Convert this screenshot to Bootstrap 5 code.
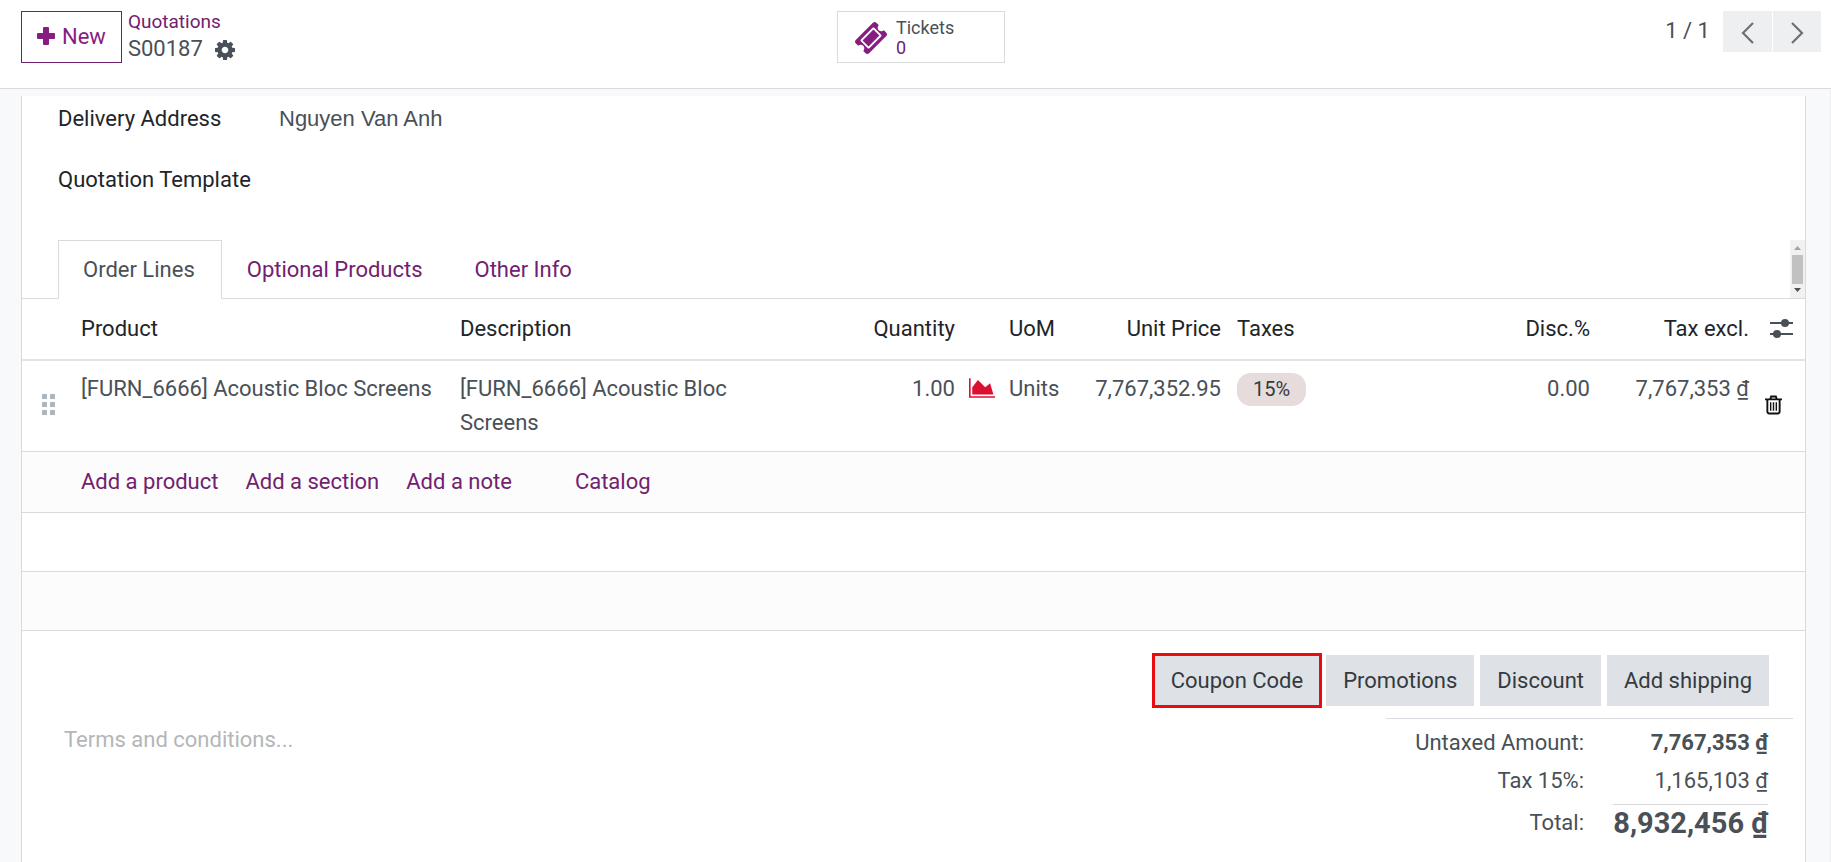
<!DOCTYPE html>
<html lang="en">
<head>
<meta charset="utf-8">
<meta name="viewport" content="width=device-width, initial-scale=1">
<title>S00187 - Quotations</title>
<link href="https://cdn.jsdelivr.net/npm/bootstrap@5.3.0/dist/css/bootstrap.min.css" rel="stylesheet">
<style>
  :root { --line: #d8dadd; --ink: #495057; --brand: #71216f; --brand-bright: #871d82; }
  body { font-family: Roboto, "Liberation Sans", sans-serif; font-size: 22px; line-height: 34px; color: var(--ink); background: #f8f9fa; }
  a, .brand-text { color: var(--brand); text-decoration: none; }
  .control-bar { height: 89px; border-bottom: 1px solid var(--line); padding: 11px 10px 0 21px; }
  .side-group { flex: 1 1 0; }
  .btn { border-radius: 0; font-size: 22px; line-height: 33px; }
  .btn-new { color: var(--brand-bright); border: 1px solid var(--brand); height: 52px; padding: 6px 15px 8px; gap: 7px; }
  .crumbs { font-size: 19px; line-height: 22px; padding-left: 6px; }
  .crumbs .current { font-size: 22px; line-height: 32px; }
  .stat-btn { width: 168px; height: 52px; border: 1px solid var(--line); background: #fff; font-size: 18px; line-height: 20px; color: var(--ink); padding: 2px 16px 0; }
  .pager-text { margin-right: 13px; padding-top: 3px; }
  .pager-btn { width: 49px; height: 41px; padding: 0; background: #eeeff1; border: 0; }
  .view-area { border-right: 1px solid #eceef0; padding: 7px 24px 0 21px; }
  .sheet { border: 1px solid var(--line); border-width: 0 1px; min-height: calc(100vh - 96px); }
  .field-row { padding: 6px 0 0 36px; height: 61px; color: #212529; }
  .field-row label { width: 221px; }
  .field-row .value { font-family: "Liberation Sans", sans-serif; color: var(--ink); }
  .tab-strip { border-bottom: 1px solid var(--line); height: 59px; margin-top: 22px; padding-left: 36px; }
  .tab-strip .nav-tabs { border: 0; }
  .tab-strip .nav-link { border-radius: 0; color: var(--brand); padding: 12px 26px 12px 24px; height: 59px; margin: 0; }
  .tab-strip .nav-link.active { color: var(--ink); border-color: var(--line) var(--line) #fff; }
  .scroller { width: 15px; background: #f1f1f1; padding: 6px 2px; }
  .scroller .thumb { height: 29px; width: 11px; background: #c1c1c1; }
  .lines-table { table-layout: fixed; width: 100%; }
  .lines-table th { font-weight: 400; color: #212529; height: 61px; padding: 0 8px; border-bottom: 2px solid #e1e3e5; }
  .lines-table td { padding: 11px 8px 0; vertical-align: top; border-bottom: 1px solid var(--line); }
  .lines-table .line-row td { height: 91px; }
  .lines-table .filler td { height: 59px; }
  .lines-table .actions td { height: 61px; padding-top: 13px; }
  .lines-table .striped td { background: #fcfcfc; }
  .lines-table .tool-cell { padding: 0 8px 2px; vertical-align: middle; }
  .action-links { gap: 27px; }
  .action-links .catalog { margin-left: 36px; }
  .icon-btn { border: 0; background: none; padding: 0; display: block; }
  .forecast { padding-top: 6px; }
  .tax-pill { display: inline-block; background: #e6dcdc; border-radius: 14px; font-size: 20px; line-height: 33px; padding: 0 16px; color: #343a40; }
  .offers { padding: 24px 36px 0 0; gap: 6px; }
  .btn-gray { background: #dee2e6; color: #343a40; border: 0; padding: 9px 17px; }
  .marked { outline: 3px solid #e80c0f; outline-offset: -1px; }
  .terms-box { padding: 17px 42px 0; }
  .terms { border: 0; resize: none; width: 100%; padding: 0; color: var(--ink); background: none; display: block; }
  .terms::placeholder { color: #b4b6b8; opacity: 1; }
  .totals { width: 407px; border-top: 1px solid var(--line); margin: 12px 12px 0 0; padding: 5px 25px 0 0; }
  .totals td, .totals th { font-weight: 400; text-align: right; padding: 0; height: 38px; }
  .totals .grand-cell { width: 184px; height: 46px; }
  .totals .grand { display: inline-block; border-top: 1px solid var(--line); font-size: 29px; font-weight: 700; line-height: 36px; vertical-align: middle; }
</style>
</head>
<body>
<header class="control-bar bg-white d-flex">
  <div class="side-group d-flex align-items-start">
    <button type="button" class="btn btn-new d-flex align-items-center"><svg width="18" height="18" viewBox="0 0 18 18" fill="currentColor" aria-hidden="true"><rect y="6" width="18" height="6" rx="1"/><rect x="6" width="6" height="18" rx="1"/></svg>New</button>
    <div class="crumbs">
      <a href="#" class="d-block">Quotations</a>
      <div class="current d-flex align-items-center gap-2"><span>S00187</span>
        <button type="button" class="icon-btn ms-1" aria-label="Actions"><svg width="20" height="20" viewBox="128 128 1536 1536" fill="#495057" aria-hidden="true"><path d="M1152 896q0-106-75-181t-181-75-181 75-75 181 75 181 181 75 181-75 75-181zm512-109v222q0 12-8 23t-20 13l-185 28q-19 54-39 91 35 50 107 138 10 12 10 25t-9 23q-27 37-99 108t-94 71q-12 0-26-9l-138-108q-44 23-91 38-16 136-29 186-7 28-36 28h-222q-14 0-24.500-8.500t-11.500-21.500l-28-184q-49-16-90-37l-141 107q-10 9-25 9-14 0-25-11-126-114-165-168-7-10-7-23 0-12 8-23 15-21 51-66.500t54-70.500q-27-50-41-99l-183-27q-13-2-21-12.500t-8-23.500v-222q0-12 8-23t19-13l186-28q14-46 39-92-40-57-107-138-10-12-10-24 0-10 9-23 26-36 98.500-107.500t94.500-71.500q13 0 26 10l138 107q44-23 91-38 16-136 29-186 7-28 36-28h222q14 0 24.500 8.500t11.500 21.500l28 184q49 16 90 37l142-107q9-9 24-9 13 0 25 10 129 119 165 170 7 8 7 22 0 12-8 23-15 21-51 66.500t-54 70.500q26 50 41 98l183 28q13 2 21 12.500t8 23.500z"/></svg></button>
      </div>
    </div>
  </div>
  <button type="button" class="stat-btn d-flex align-items-center text-start">
    <svg class="me-2" width="34" height="34" viewBox="0 0 1792 1792" fill="#871d82" aria-hidden="true"><path d="M1024 452l316 316-572 572-316-316zm-211 979l618-618q19-19 19-45t-19-45l-362-362q-18-18-45-18t-45 18l-618 618q-19 19-19 45t19 45l362 362q18 18 45 18t45-18zm889-637l-907 908q-37 37-90.500 37t-90.500-37l-126-125q56-56 56-136t-56-136-136-56-136 56l-125-126q-37-37-37-90.500t37-90.500l907-906q37-37 90.500-37t90.500 37l125 125q-56 56-56 136t56 136 136 56 136-56l126 125q37 37 37 90.500t-37 90.500z"/></svg>
    <span><span class="d-block">Tickets</span><span class="d-block brand-text">0</span></span>
  </button>
  <div class="side-group d-flex justify-content-end">
    <span class="pager-text">1 / 1</span>
    <nav class="d-flex" aria-label="Pager">
      <button type="button" class="btn pager-btn" aria-label="Previous"><svg width="14" height="22" viewBox="0 0 14 22" fill="none" stroke="#6c7075" stroke-width="2.2" aria-hidden="true"><path d="M12 1 2 11l10 10"/></svg></button>
      <button type="button" class="btn pager-btn border-start border-white" aria-label="Next"><svg width="14" height="22" viewBox="0 0 14 22" fill="none" stroke="#6c7075" stroke-width="2.2" aria-hidden="true"><path d="m2 1 10 10L2 21"/></svg></button>
    </nav>
  </div>
</header>

<div class="view-area">
<main class="sheet bg-white">
  <div class="field-row d-flex"><label for="address">Delivery Address</label><output id="address" class="value p-0">Nguyen Van Anh</output></div>
  <div class="field-row d-flex"><label for="template">Quotation Template</label><output id="template" class="value p-0"></output></div>

  <div class="tab-strip d-flex justify-content-between">
    <nav class="nav nav-tabs">
      <a class="nav-link active" href="#">Order Lines</a>
      <a class="nav-link" href="#">Optional Products</a>
      <a class="nav-link" href="#">Other Info</a>
    </nav>
    <div class="scroller d-flex flex-column align-items-center justify-content-between" aria-hidden="true">
      <svg width="7" height="4" viewBox="0 0 7 4"><path fill="#a3a3a3" d="M0 4 3.500 0 7 4z"/></svg>
      <div class="thumb"></div>
      <svg width="7" height="4" viewBox="0 0 7 4"><path fill="#505050" d="M0 0h7L3.500 4z"/></svg>
    </div>
  </div>

  <table class="lines-table">
    <colgroup><col style="width:51px"><col style="width:379px"><col style="width:348px"><col style="width:163px"><col style="width:38px"><col style="width:75px"><col style="width:153px"><col><col style="width:98px"><col style="width:159px"><col style="width:48px"></colgroup>
    <thead><tr><th></th><th>Product</th><th>Description</th><th class="text-end">Quantity</th><th></th><th>UoM</th><th class="text-end">Unit Price</th><th>Taxes</th><th class="text-end">Disc.%</th><th class="text-end">Tax excl.</th>
      <th class="tool-cell"><button type="button" class="icon-btn ms-1" aria-label="Optional columns"><svg class="d-block" width="24" height="20" viewBox="0 0 24 20" fill="#495057" aria-hidden="true"><path d="M1 4h23v2H1zM1 15h23v2H1z"/><circle cx="16" cy="5" r="4"/><circle cx="8" cy="16" r="4"/></svg></button></th></tr></thead>
    <tbody>
      <tr class="line-row"><td class="tool-cell"><svg class="d-block ms-2 ps-1" width="18" height="22" viewBox="0 0 14 22" fill="#adb5bd" aria-hidden="true"><path d="M0 0h5v5H0zM8 0h5v5H8zM0 8h5v5H0zM8 8h5v5H8zM0 16h5v5H0zM8 16h5v5H8z"/></svg></td>
        <td class="text-nowrap">[FURN_6666] Acoustic Bloc Screens</td><td>[FURN_6666] Acoustic Bloc Screens</td><td class="text-end">1.00</td>
        <td class="px-0"><button type="button" class="icon-btn forecast ms-auto me-auto" aria-label="Forecast"><svg class="d-block" width="26" height="20" viewBox="0 128 2048 1536" fill="#dc0f32" aria-hidden="true"><path d="M2048 1536v128h-2048v-1536h128v1408h1920zm-384-1024l256 896h-1664v-576l448-576 576 576z"/></svg></button></td>
        <td>Units</td><td class="text-end">7,767,352.95</td><td><span class="tax-pill">15%</span></td><td class="text-end">0.00</td><td class="text-end text-nowrap">7,767,353 ₫</td>
        <td class="tool-cell"><button type="button" class="icon-btn" aria-label="Delete"><svg class="d-block" width="17" height="20" viewBox="0 0 18 20" fill="none" stroke="#111" stroke-width="2" aria-hidden="true"><path d="M0 4h18M5.500 4l1-3h5l1 3M2.500 4v13q0 2 2 2h9q2 0 2-2V4"/><path stroke-width="1.500" d="M6 7v9M9 7v9M12 7v9"/></svg></button></td></tr>
      <tr class="actions striped"><td></td><td colspan="10"><div class="d-flex action-links"><a href="#">Add a product</a><a href="#">Add a section</a><a href="#">Add a note</a><a href="#" class="catalog">Catalog</a></div></td></tr>
      <tr class="filler"><td colspan="11"></td></tr>
      <tr class="filler striped"><td colspan="11"></td></tr>
    </tbody>
  </table>

  <div class="d-flex justify-content-end offers">
    <button type="button" class="btn btn-gray marked">Coupon Code</button>
    <button type="button" class="btn btn-gray">Promotions</button>
    <button type="button" class="btn btn-gray">Discount</button>
    <button type="button" class="btn btn-gray">Add shipping</button>
  </div>
  <div class="d-flex">
    <div class="flex-grow-1 terms-box"><textarea class="terms" rows="2" aria-label="Terms and conditions" placeholder="Terms and conditions..."></textarea></div>
    <div class="totals"><table class="w-100"><tbody>
      <tr><th scope="row">Untaxed Amount:</th><td class="fw-bold">7,767,353 ₫</td></tr>
      <tr><th scope="row">Tax 15%:</th><td>1,165,103 ₫</td></tr>
      <tr><th scope="row">Total:</th><td class="grand-cell"><span class="grand">8,932,456 ₫</span></td></tr>
    </tbody></table></div>
  </div>
</main>
</div>
<script src="https://cdn.jsdelivr.net/npm/bootstrap@5.3.0/dist/js/bootstrap.bundle.min.js"></script>
</body>
</html>
